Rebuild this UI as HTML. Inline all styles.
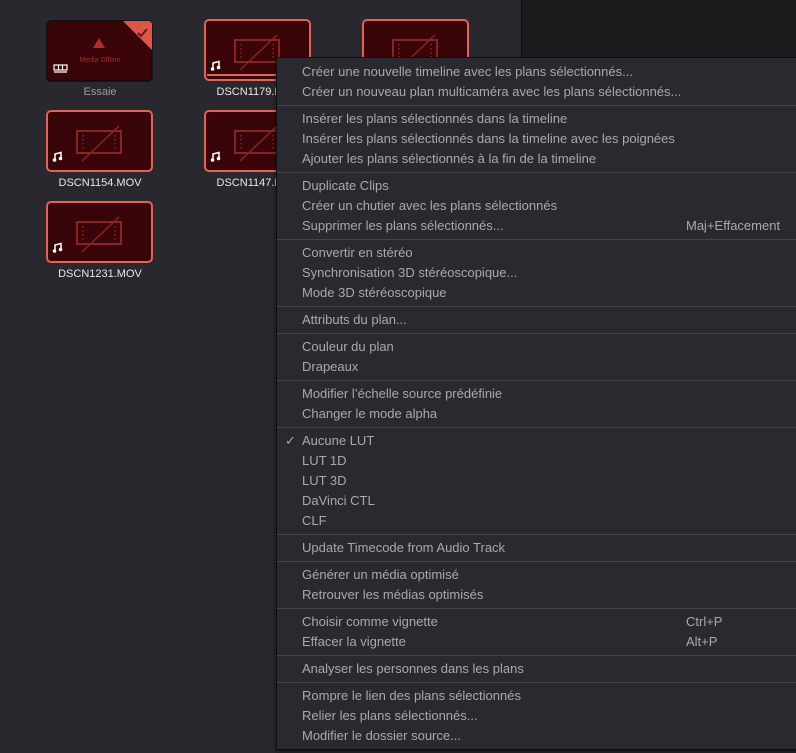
<!DOCTYPE html>
<html><head><meta charset="utf-8"><style>
*{margin:0;padding:0;box-sizing:border-box}
body{width:796px;height:753px;overflow:hidden;background:#29282e;position:relative;font-family:"Liberation Sans",sans-serif}
#right{position:absolute;left:521px;top:0;width:275px;height:60px;background:#1c1c1d;border-left:1px solid #0e0e0f}
.card{position:absolute;width:107px;height:62px}
.lbl{position:absolute;width:140px;text-align:center;font-size:11px;color:#e8e8e8}
#menu{position:absolute;left:276px;top:57px;width:530px;height:693px;background:#2a292f;border:1px solid #0d0d0e;padding-top:4px;box-shadow:0 2px 4px rgba(0,0,0,.5)}
.it{height:20px;line-height:20px;font-size:13px;color:#a9a9ac;padding-left:25px;position:relative;white-space:nowrap}
.sc{position:absolute;left:409px;top:0}
.sep{height:7px;position:relative}
.sep:after{content:"";position:absolute;left:0;right:0;top:3px;height:1px;background:#45454b}
.ck{position:absolute;left:8px;top:0;font-size:13px}
</style></head><body>
<div id="right"></div>

<svg class="card" style="left:46px;top:20px" width="107" height="62" viewBox="0 0 107 62">
<rect x="1" y="1" width="105" height="60" rx="4" fill="#3a0508" stroke="#0d0d0d" stroke-width="1.5"/>
<path d="M77 1 H102 Q106 1 106 5 V30 Z" fill="#e0554a"/>
<path d="M92 13 l3 3 l6 -7" stroke="#6b1a17" stroke-width="2" fill="none"/>
<path d="M53 18 l6 10 h-12 z" fill="#b32a2a"/>
<text x="54" y="42" font-size="7" fill="#a52828" text-anchor="middle" font-family="Liberation Sans">Media Offline</text>
<rect x="8" y="45" width="13" height="5" fill="none" stroke="#fff" stroke-width="1.2"/>
<path d="M12.5 45v5M16.5 45v5M8 52h13" stroke="#fff" stroke-width="1.2"/>
</svg>
<div class="lbl" style="left:30px;top:86px;color:#9a9a9e">Essaie</div>

<svg width="0" height="0" style="position:absolute"><defs>
<g id="cl">
<rect x="1" y="1" width="105" height="60" rx="4" fill="#3a0508" stroke="#e0645a" stroke-width="2"/>
<rect x="31" y="21" width="44" height="22" fill="none" stroke="#8a2424" stroke-width="2"/>
<path d="M37 25v15M69 25v15" stroke="#8a2424" stroke-width="1.5" stroke-dasharray="1.5 2.5"/>
<path d="M36 51 L73 16" stroke="#8a2424" stroke-width="1.5"/>
<path d="M9 50 v-6 l6 -1.5 v6" stroke="#fff" stroke-width="1.5" fill="none"/>
<circle cx="8.5" cy="50" r="1.8" fill="#fff"/><circle cx="14.5" cy="48.5" r="1.8" fill="#fff"/>
</g></defs></svg>

<svg class="card" style="left:46px;top:110px"><use href="#cl"/></svg>
<div class="lbl" style="left:30px;top:177px">DSCN1154.MOV</div>
<svg class="card" style="left:46px;top:201px"><use href="#cl"/></svg>
<div class="lbl" style="left:30px;top:268px">DSCN1231.MOV</div>
<svg class="card" style="left:204px;top:19px"><use href="#cl"/><path d="M3 56h101" stroke="#e0645a" stroke-width="2"/></svg>
<div class="lbl" style="left:188px;top:86px">DSCN1179.MOV</div>
<svg class="card" style="left:204px;top:110px"><use href="#cl"/></svg>
<div class="lbl" style="left:188px;top:177px">DSCN1147.MOV</div>
<svg class="card" style="left:362px;top:19px"><use href="#cl"/></svg>

<div id="menu">
<div class="it">Créer une nouvelle timeline avec les plans sélectionnés...</div>
<div class="it">Créer un nouveau plan multicaméra avec les plans sélectionnés...</div>
<div class="sep"></div>
<div class="it">Insérer les plans sélectionnés dans la timeline</div>
<div class="it">Insérer les plans sélectionnés dans la timeline avec les poignées</div>
<div class="it">Ajouter les plans sélectionnés à la fin de la timeline</div>
<div class="sep"></div>
<div class="it">Duplicate Clips</div>
<div class="it">Créer un chutier avec les plans sélectionnés</div>
<div class="it">Supprimer les plans sélectionnés...<span class="sc">Maj+Effacement</span></div>
<div class="sep"></div>
<div class="it">Convertir en stéréo</div>
<div class="it">Synchronisation 3D stéréoscopique...</div>
<div class="it">Mode 3D stéréoscopique</div>
<div class="sep"></div>
<div class="it">Attributs du plan...</div>
<div class="sep"></div>
<div class="it">Couleur du plan</div>
<div class="it">Drapeaux</div>
<div class="sep"></div>
<div class="it">Modifier l’échelle source prédéfinie</div>
<div class="it">Changer le mode alpha</div>
<div class="sep"></div>
<div class="it"><span class="ck">✓</span>Aucune LUT</div>
<div class="it">LUT 1D</div>
<div class="it">LUT 3D</div>
<div class="it">DaVinci CTL</div>
<div class="it">CLF</div>
<div class="sep"></div>
<div class="it">Update Timecode from Audio Track</div>
<div class="sep"></div>
<div class="it">Générer un média optimisé</div>
<div class="it">Retrouver les médias optimisés</div>
<div class="sep"></div>
<div class="it">Choisir comme vignette<span class="sc">Ctrl+P</span></div>
<div class="it">Effacer la vignette<span class="sc">Alt+P</span></div>
<div class="sep"></div>
<div class="it">Analyser les personnes dans les plans</div>
<div class="sep"></div>
<div class="it">Rompre le lien des plans sélectionnés</div>
<div class="it">Relier les plans sélectionnés...</div>
<div class="it">Modifier le dossier source...</div>
</div>
</body></html>
